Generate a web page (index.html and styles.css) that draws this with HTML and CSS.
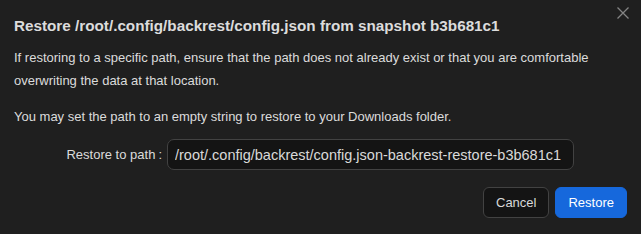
FILE: index.html
```html
<!DOCTYPE html>
<html lang="en">
<head>
    <meta charset="UTF-8">
    <meta name="viewport" content="width=device-width, initial-scale=1.0">
    <title>Restore snapshot</title>
    <link rel="stylesheet" href="styles.css">
</head>
<body>

    <div class="modal">
        <button class="modal-close" aria-label="Close">
            <svg width="12" height="12" viewBox="0 0 12 12">
                <path d="M0.5 0.5 L11.5 11.5 M11.5 0.5 L0.5 11.5" stroke="currentColor" stroke-width="1.3" fill="none"/>
            </svg>
        </button>

        <div class="modal-title">Restore /root/.config/backrest/config.json from snapshot b3b681c1</div>

        <div class="modal-body">
            <p>If restoring to a specific path, ensure that the path does not already exist or that you are comfortable overwriting the data at that location.</p>
            <p>You may set the path to an empty string to restore to your Downloads folder.</p>

            <div class="form-item">
                <label class="form-label" for="target">Restore to path</label>
                <input type="text" id="target" class="form-input" value="/root/.config/backrest/config.json-backrest-restore-b3b681c1">
            </div>
        </div>

        <div class="modal-footer">
            <button class="btn">Cancel</button>
            <button class="btn btn-primary">Restore</button>
        </div>
    </div>

</body>
</html>
```

FILE: styles.css
```css
html, body {
    margin: 0;
    background-color: #1f1f1f;
}
body {
    font-family: "Liberation Sans", Arial, sans-serif;
    font-size: 13px;
    color: rgba(255, 255, 255, 0.85);
}
.modal {
    position: relative;
    padding: 14px 14px 16px 14px;
}
.modal-close {
    position: absolute;
    top: 7px;
    right: 12px;
    padding: 0;
    border: none;
    background: none;
    color: rgba(255, 255, 255, 0.45);
    cursor: pointer;
    line-height: 0;
}
.modal-title {
    font-size: 15.25px;
    font-weight: bold;
    line-height: 24px;
    margin-bottom: 8px;
}
.modal-body p {
    margin: 0 0 13px 0;
    line-height: 23px;
}
.modal-body p:last-of-type {
    margin-bottom: 0;
}
.form-item {
    display: flex;
    align-items: center;
    margin-top: 11px;
}
.form-label {
    width: 148px;
    text-align: right;
    padding-right: 5px;
}
.form-label::after {
    content: ":";
    margin-left: 3px;
}
.form-input {
    width: 407px;
    height: 31px;
    box-sizing: border-box;
    padding: 0 7px;
    font-family: "Liberation Sans", Arial, sans-serif;
    font-size: 14.5px;
    color: rgba(255, 255, 255, 0.85);
    background-color: #141414;
    border: 1px solid #424242;
    border-radius: 7px;
    outline: none;
}
.modal-footer {
    display: flex;
    justify-content: flex-end;
    gap: 6px;
    margin-top: 17px;
}
.btn {
    height: 31px;
    padding: 0 12px;
    font-family: "Liberation Sans", Arial, sans-serif;
    font-size: 13px;
    color: rgba(255, 255, 255, 0.85);
    background-color: #141414;
    border: 1px solid #424242;
    border-radius: 6px;
    cursor: pointer;
}
.btn-primary {
    background-color: #1668dc;
    border-color: #1668dc;
    color: #fff;
}
```
